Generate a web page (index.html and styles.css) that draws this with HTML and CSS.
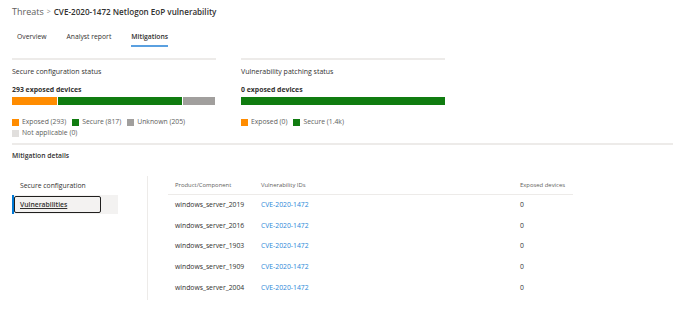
FILE: index.html
```html
<!DOCTYPE html>
<html lang="en">
<head>
<meta charset="utf-8">
<title>CVE-2020-1472 Netlogon EoP vulnerability</title>
<link rel="stylesheet" href="styles.css">
</head>
<body>
<div class="page">
  <div class="breadcrumb">
    <span class="crumb">Threats</span>
    <span class="sep">&gt;</span>
    <span class="crumb-current">CVE-2020-1472 Netlogon EoP vulnerability</span>
  </div>
  <div class="tabs">
    <span class="tab">Overview</span>
    <span class="tab">Analyst report</span>
    <span class="tab tab-active">Mitigations</span>
  </div>
  <div class="cards">
    <div class="card">
      <div class="card-title">Secure configuration status</div>
      <div class="card-count">293 exposed devices</div>
      <div class="bar">
        <div class="seg seg-exposed" style="width:45px"></div>
        <div class="seg seg-secure" style="width:124px"></div>
        <div class="seg seg-unknown" style="width:32px"></div>
      </div>
      <div class="legend">
        <span class="legend-item"><i class="sw seg-exposed"></i>Exposed (293)</span>
        <span class="legend-item"><i class="sw seg-secure"></i>Secure (817)</span>
        <span class="legend-item"><i class="sw seg-unknown"></i>Unknown (205)</span>
        <span class="legend-item"><i class="sw seg-na"></i>Not applicable (0)</span>
      </div>
    </div>
    <div class="card">
      <div class="card-title">Vulnerability patching status</div>
      <div class="card-count">0 exposed devices</div>
      <div class="bar">
        <div class="seg seg-secure seg-full"></div>
      </div>
      <div class="legend">
        <span class="legend-item"><i class="sw seg-exposed"></i>Exposed (0)</span>
        <span class="legend-item"><i class="sw seg-secure"></i>Secure (1.4k)</span>
      </div>
    </div>
  </div>
  <div class="section">
    <div class="section-title">Mitigation details</div>
    <div class="details">
      <nav class="side-nav">
        <div class="nav-item">Secure configuration</div>
        <div class="nav-item nav-item-active"><span class="focus-box">Vulnerabilities</span></div>
      </nav>
      <div class="table-wrap">
        <table class="grid">
          <colgroup><col class="c1"><col class="c2"><col class="c3"></colgroup>
          <thead>
            <tr><th>Product/Component</th><th>Vulnerability IDs</th><th>Exposed devices</th></tr>
          </thead>
          <tbody>
            <tr><td>windows_server_2019</td><td><a class="link">CVE-2020-1472</a></td><td>0</td></tr>
            <tr><td>windows_server_2016</td><td><a class="link">CVE-2020-1472</a></td><td>0</td></tr>
            <tr><td>windows_server_1903</td><td><a class="link">CVE-2020-1472</a></td><td>0</td></tr>
            <tr><td>windows_server_1909</td><td><a class="link">CVE-2020-1472</a></td><td>0</td></tr>
            <tr><td>windows_server_2004</td><td><a class="link">CVE-2020-1472</a></td><td>0</td></tr>
          </tbody>
        </table>
      </div>
    </div>
  </div>
</div>
</body>
</html>
```
FILE: styles.css
```css
* { box-sizing: border-box; }
html, body { margin: 0; padding: 0; background: #fff; }
body {
  font-family: "Open Sans", "Noto Sans", sans-serif;
  color: #323130;
  font-size: 7px;
}
.page { padding: 3px 7px 0 12px; width: 680px; }

.breadcrumb { height: 16px; display: flex; align-items: center; }
.crumb { color: #605e5c; font-size: 9px; }
.sep { color: #8a8886; margin: 0 3px 0 3px; font-size: 7px; }
.crumb-current { font-weight: 600; color: #323130; font-size: 8.1px; }

.tabs { display: flex; gap: 20px; padding-left: 5px; margin-top: 12px; height: 15px; }
.tab { font-size: 6.8px; color: #323130; line-height: 12px; height: 15px; position: relative; }
.tab-active { font-weight: 600; }
.tab-active::after { content: ""; position: absolute; left: 0; right: 0; top: 14px; height: 2px; background: #5aa0e0; }

.cards { display: flex; gap: 25px; margin-top: 12px; }
.card { width: 204px; border-top: 2px solid #edebe9; padding-top: 7px; }
.card-title { font-size: 7px; color: #323130; line-height: 10px; }
.card-count { font-size: 6.9px; font-weight: 700; margin-top: 8px; line-height: 10px; }
.bar { display: flex; gap: 1px; height: 8px; margin-top: 2px; }
.seg { height: 100%; }
.seg-full { width: 100%; }
.seg-exposed { background: #ff8c00; }
.seg-secure { background: #107c10; }
.seg-unknown { background: #a19f9d; }
.seg-na { background: #e1dfdd; }
.legend { display: flex; flex-wrap: wrap; column-gap: 6px; row-gap: 1px; margin-top: 12px; font-size: 6.8px; color: #605e5c; line-height: 10px; }
.legend-item { display: inline-flex; align-items: center; }
.sw { display: inline-block; width: 7px; height: 7px; margin-right: 3px; }

.section { border-top: 2px solid #edebe9; margin-top: 5px; width: 661px; }
.section-title { font-size: 6.8px; font-weight: 600; margin-top: 6px; line-height: 10px; }

.details { display: flex; margin-top: 15px; }
.side-nav { width: 136px; border-right: 1px solid #edebe9; height: 124px; }
.nav-item { height: 19px; width: 106px; padding-left: 8px; font-size: 6.8px; line-height: 19px; color: #323130; }
.nav-item-active { background: #f3f2f1; border-left: 2px solid #0078d4; padding-left: 0; display: flex; align-items: center; }
.focus-box { display: block; width: 87px; height: 17px; border: 1px solid #201f1e; border-radius: 2px; padding-left: 5px; line-height: 15px; font-weight: 600; text-decoration: underline; }

.table-wrap { padding-left: 20px; }
.grid { border-collapse: collapse; table-layout: fixed; width: 405px; font-size: 6.8px; }
.c1 { width: 86px; }
.c2 { width: 259px; }
.c3 { width: 60px; }
.grid th { font-weight: 400; font-size: 5.9px; color: #605e5c; text-align: left; height: 18px; padding: 0 0 0 7px; border-bottom: 1px solid #edebe9; white-space: nowrap; }
.grid td { height: 20.7px; padding: 0 0 0 7px; color: #323130; white-space: nowrap; }
.link { color: #2b88d8; text-decoration: none; }
```
